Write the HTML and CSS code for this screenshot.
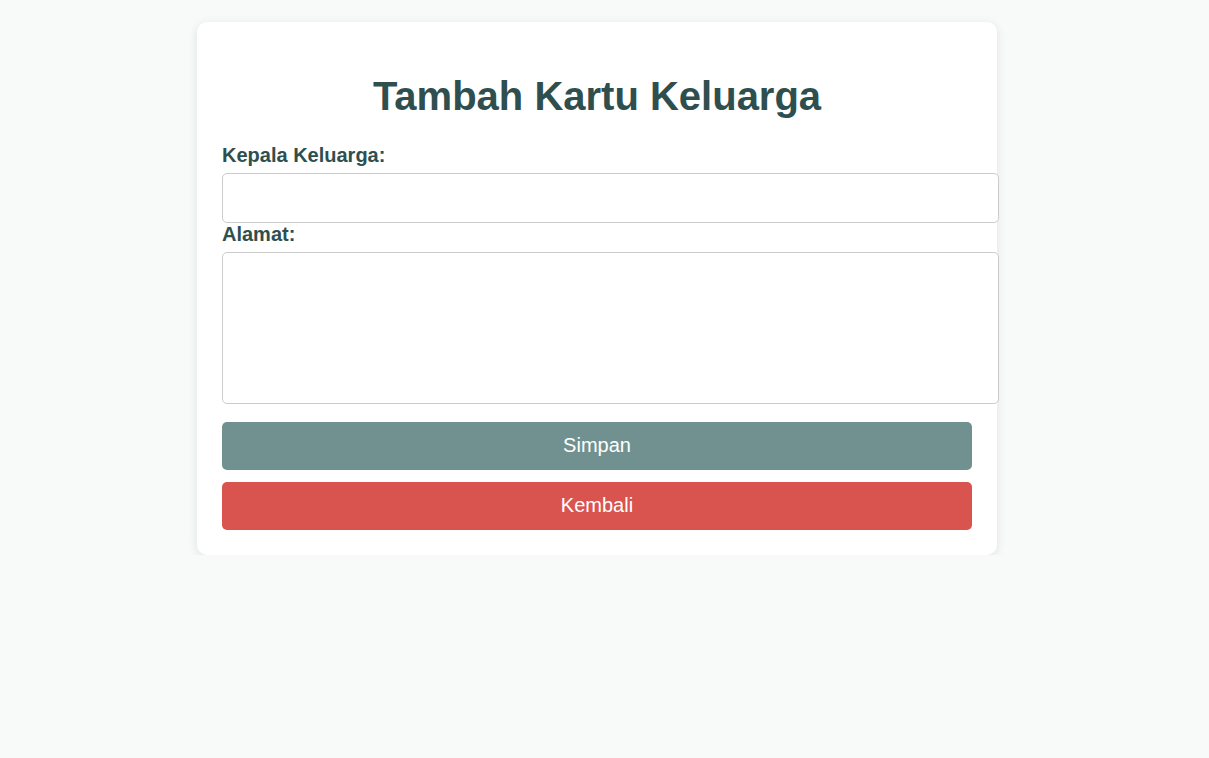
FILE: index.html
```html
<!DOCTYPE html>
<html lang="id">
<head>
<meta charset="utf-8">
<title>Tambah Kartu Keluarga</title>
<link rel="stylesheet" href="styles.css">
</head>
<body>
<div class="card">
  <h1 class="title">Tambah Kartu Keluarga</h1>
  <form class="form">
    <label class="label" for="kepala">Kepala Keluarga:</label>
    <input class="field" type="text" id="kepala">
    <label class="label" for="alamat">Alamat:</label>
    <textarea class="field area" id="alamat"></textarea>
    <button class="btn btn-save" type="button">Simpan</button>
    <button class="btn btn-back" type="button">Kembali</button>
  </form>
</div>
</body>
</html>
```
FILE: styles.css
```css
html, body {
  margin: 0;
  padding: 0;
}
body {
  background: #f8f9f9;
  font-family: "Liberation Sans", Arial, sans-serif;
  color: #2f4f4f;
  padding-top: 22px;
}
.card {
  width: 750px;
  margin-left: 197px;
  padding: 25px;
  background: #ffffff;
  border-radius: 10px;
  box-shadow: 0 2px 10px rgba(0, 0, 0, 0.1);
}
.title {
  margin: 26px 0 25px;
  font-size: 40px;
  font-weight: bold;
  text-align: center;
  line-height: 46px;
  color: #2f4f4f;
}
.form {
  margin: 0;
}
.label {
  display: block;
  font-size: 20px;
  font-weight: bold;
  line-height: 23px;
  margin-bottom: 6px;
  color: #2f4f4f;
}
.field {
  display: block;
  box-sizing: content-box;
  width: 100%;
  margin: 0;
  padding: 12px 13px 12px 12px;
  border: 1px solid #cccccc;
  border-radius: 5px;
  font-family: "Liberation Sans", Arial, sans-serif;
  font-size: 18px;
  height: 24px;
  background: #fff;
  outline: none;
}
.area {
  height: 126px;
  resize: none;
}
.btn {
  display: block;
  width: 100%;
  height: 48px;
  padding: 0 0 1px;
  border: none;
  border-radius: 5px;
  color: #ffffff;
  font-family: "Liberation Sans", Arial, sans-serif;
  font-size: 20px;
  cursor: pointer;
}
.btn-save {
  margin-top: 18px;
  background: #719190;
}
.btn-back {
  margin-top: 12px;
  background: #d9534f;
}
```
